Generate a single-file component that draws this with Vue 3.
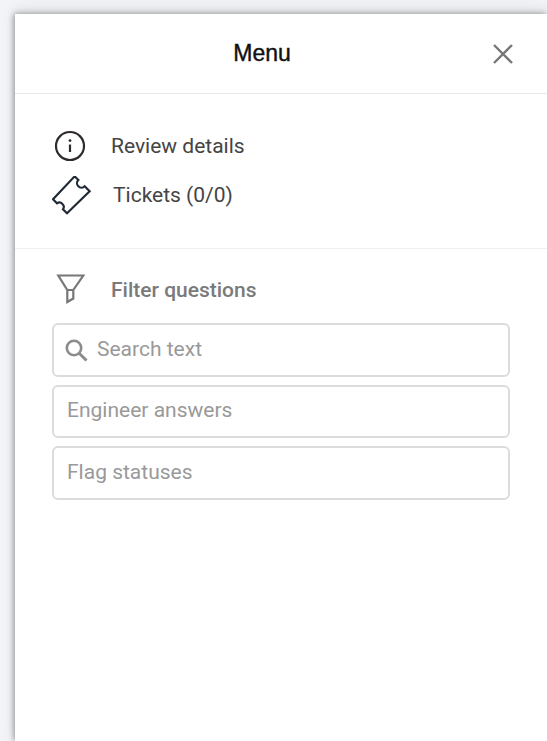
<script setup>
const menuItems = [
  { label: "Review details", icon: "info" },
  { label: "Tickets (0/0)", icon: "ticket" },
];

const fields = ["Engineer answers", "Flag statuses"];
</script>

<template>
  <div class="page">
    <aside class="drawer">
      <header class="head">
        <h1 class="title">Menu</h1>
        <svg class="close" width="22" height="22" viewBox="0 0 22 22">
          <path d="M2 2 L20 20 M20 2 L2 20" fill="none" stroke="#777" stroke-width="2.4" />
        </svg>
      </header>

      <section class="links">
        <div v-for="item in menuItems" :key="item.label" class="link" :class="item.icon">
          <svg v-if="item.icon === 'info'" class="ico" width="32" height="32" viewBox="0 0 32 32">
            <circle cx="16" cy="16" r="14" fill="none" stroke="#2f2b2b" stroke-width="2.2" />
            <circle cx="16" cy="10.6" r="1.4" fill="#2f2b2b" />
            <path d="M16 14.5 V22" stroke="#2f2b2b" stroke-width="2.2" />
          </svg>
          <svg v-else class="ico" width="40" height="40" viewBox="12 12 120 120">
            <path
              d="M80 13 L91 24 A13 13 0 0 0 110 43 L125 58 L57 124 L45 112 A13 13 0 0 0 27 94 L15 82 Z"
              fill="none"
              stroke="#1f2a35"
              stroke-width="6.5"
            />
          </svg>
          <span class="label">{{ item.label }}</span>
        </div>
      </section>

      <section class="filters">
        <div class="filter-head">
          <svg class="funnel" width="30" height="32" viewBox="0 0 30 32">
            <path d="M2.3 1.5 H27.3 L17.3 16 V24.5 L11.3 28 V16 Z M11.3 16 H17.3" fill="none" stroke="#777" stroke-width="2.2" />
          </svg>
          <span class="filter-title">Filter questions</span>
        </div>

        <div class="field search">
          <svg width="24" height="24" viewBox="0 0 24 24">
            <circle cx="10" cy="10" r="7.2" fill="none" stroke="#8c8c8c" stroke-width="2.6" />
            <path d="M15.2 15.2 L22.5 22.5" stroke="#8c8c8c" stroke-width="3" />
          </svg>
          <span>Search text</span>
        </div>
        <div v-for="f in fields" :key="f" class="field">
          <span>{{ f }}</span>
        </div>
      </section>
    </aside>
  </div>
</template>

<style scoped>
.page {
  height: 741px;
  padding: 14px 0 0 15px;
  box-sizing: border-box;
  background: #f3f4f7;
  overflow: hidden;
  font-family: Roboto, "Liberation Sans", sans-serif;
}

.drawer {
  height: 727px;
  background: #fff;
  box-shadow: -1px 0 6px rgba(0, 0, 0, 0.38), 0 -4px 14px rgba(0, 0, 0, 0.1);
}

.head {
  height: 79px;
  padding-right: 38px;
  border-bottom: 1px solid #e8e8e8;
  display: flex;
  align-items: center;
  justify-content: center;
  position: relative;
}

.title {
  margin: 0;
  font-family: "Liberation Sans", Arial, sans-serif;
  font-size: 23px;
  font-weight: 400;
  color: #111;
  -webkit-text-stroke: 0.4px #111;
}

.close {
  position: absolute;
  right: 33px;
  top: 29px;
}

.links {
  height: 155px;
  border-bottom: 1px solid #efefef;
  padding: 30px 0 0 37px;
  box-sizing: border-box;
}

.link {
  display: flex;
  align-items: center;
  color: #444;
  font-size: 21px;
}

.link.info {
  height: 44px;
  padding-left: 2px;
}

.link.info .label {
  margin-left: 25px;
}

.link.ticket {
  height: 54px;
}

.link.ticket .ico {
  margin-top: 2px;
}

.link.ticket .label {
  margin-left: 21px;
}

.filters {
  padding: 12px 37px 0;
}

.filter-head {
  display: flex;
  align-items: center;
  height: 58px;
  padding-left: 4px;
}

.filter-title {
  margin-left: 25px;
  font-size: 21px;
  font-weight: 500;
  color: #7a7a7a;
}

.field {
  height: 53.5px;
  box-sizing: border-box;
  border: 2px solid #dcdcdc;
  border-radius: 6px;
  display: flex;
  align-items: center;
  padding: 0 0 2px 13px;
  margin-bottom: 8px;
  font-size: 21px;
  color: #999;
}

.search {
  gap: 9px;
  padding-left: 10px;
  margin-top: 4px;
}

.search svg {
  margin-top: 2px;
}
</style>

<style>
html,
body {
  margin: 0;
}
</style>
